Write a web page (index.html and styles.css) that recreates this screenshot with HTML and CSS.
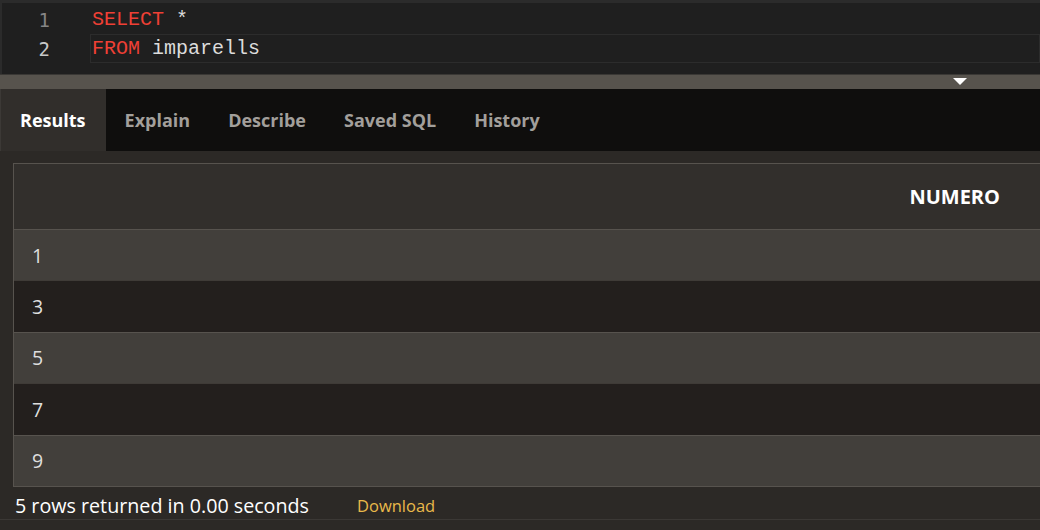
FILE: index.html
```html
<!DOCTYPE html>
<html>
<head>
<meta charset="utf-8">
<link rel="stylesheet" href="styles.css">
</head>
<body>
<div class="editor">
  <div class="line">
    <span class="gutter dim">1</span>
    <span class="code"><span class="kw">SELECT</span> *</span>
  </div>
  <div class="line active">
    <span class="gutter">2</span>
    <span class="code"><span class="kw">FROM</span> imparells</span>
  </div>
</div>
<div class="splitter"><span class="arrow"></span></div>
<div class="tabs">
  <div class="tab selected">Results</div>
  <div class="tab">Explain</div>
  <div class="tab">Describe</div>
  <div class="tab">Saved SQL</div>
  <div class="tab">History</div>
</div>
<div class="panel">
  <div class="grid">
    <div class="head">NUMERO</div>
    <div class="row odd">1</div>
    <div class="row even">3</div>
    <div class="row odd">5</div>
    <div class="row even">7</div>
    <div class="row odd">9</div>
  </div>
  <div class="footer">
    <span class="count">5 rows returned in 0.00 seconds</span>
    <span class="download">Download</span>
  </div>
</div>
</body>
</html>
```
FILE: styles.css
```css
html, body {
  margin: 0;
  padding: 0;
  width: 1040px;
  height: 530px;
  overflow: hidden;
  background: #2c2926;
  font-family: "Open Sans", "Noto Sans", sans-serif;
}
.editor {
  height: 69px;
  border-top: 3px solid #2b2b2b;
  border-left: 2px solid #2b2b2b;
  background: #1f1f1f;
  padding-top: 2px;
  box-sizing: content-box;
}
.line {
  display: flex;
  height: 29px;
  align-items: center;
}
.gutter {
  width: 48px;
  text-align: right;
  padding-right: 40px;
  font-family: "DejaVu Sans Mono", monospace;
  font-size: 19px;
  color: #c8c8c8;
}
.gutter.dim { color: #858585; }
.code {
  flex: 1;
  height: 27px;
  display: flex;
  align-items: center;
  border: 1px solid transparent;
  padding-left: 1px;
  font-family: "Liberation Mono", monospace;
  font-size: 20px;
  color: #dcdcdc;
  white-space: pre;
}
.line.active .code { border-color: #2c2c2c; }
.kw { color: #ef4035; }
.splitter {
  height: 14px;
  background: #57534d;
  border-top: 1px solid #3a3835;
  position: relative;
}
.arrow {
  position: absolute;
  left: 953px;
  top: 3px;
  width: 0;
  height: 0;
  border-left: 7px solid transparent;
  border-right: 7px solid transparent;
  border-top: 7px solid #ffffff;
}
.tabs {
  display: flex;
  height: 62px;
  background: #0f0e0d;
}
.tab {
  display: flex;
  align-items: center;
  padding: 0 19px;
  font-size: 18px;
  font-weight: 700;
  color: #a29f9b;
}
.tab.selected {
  background: #312e2b;
  color: #ffffff;
  border-left: 1px solid #3c3936;
  padding: 0 20px 0 19px;
}
.panel {
  padding: 12px 0 0 13px;
}
.grid {
  border-top: 1px solid #57534e;
  border-left: 1px solid #57534e;
  border-bottom: 1px solid #57534e;
}
.head {
  height: 65px;
  background: #322f2c;
  display: flex;
  align-items: center;
  justify-content: flex-end;
  padding-right: 40px;
  font-size: 20px;
  font-weight: 700;
  color: #ffffff;
}
.row {
  height: 50.4px;
  border-top: 1px solid #57534e;
  display: flex;
  align-items: center;
  padding-left: 18px;
  font-size: 19.5px;
  color: #dedede;
}
.row.odd { background: #423f3b; }
.row.even { background: #231f1d; border-top-color: #3f3b37; }
.footer {
  height: 26px;
  padding-top: 6px;
  margin-left: -13px;
  padding-left: 15px;
  display: flex;
  align-items: center;
  border-bottom: 1px solid #3b3835;
}
.count {
  font-size: 19.7px;
  color: #ffffff;
  width: 342px;
}
.download {
  font-size: 16.5px;
  color: #e9b94a;
}
```
